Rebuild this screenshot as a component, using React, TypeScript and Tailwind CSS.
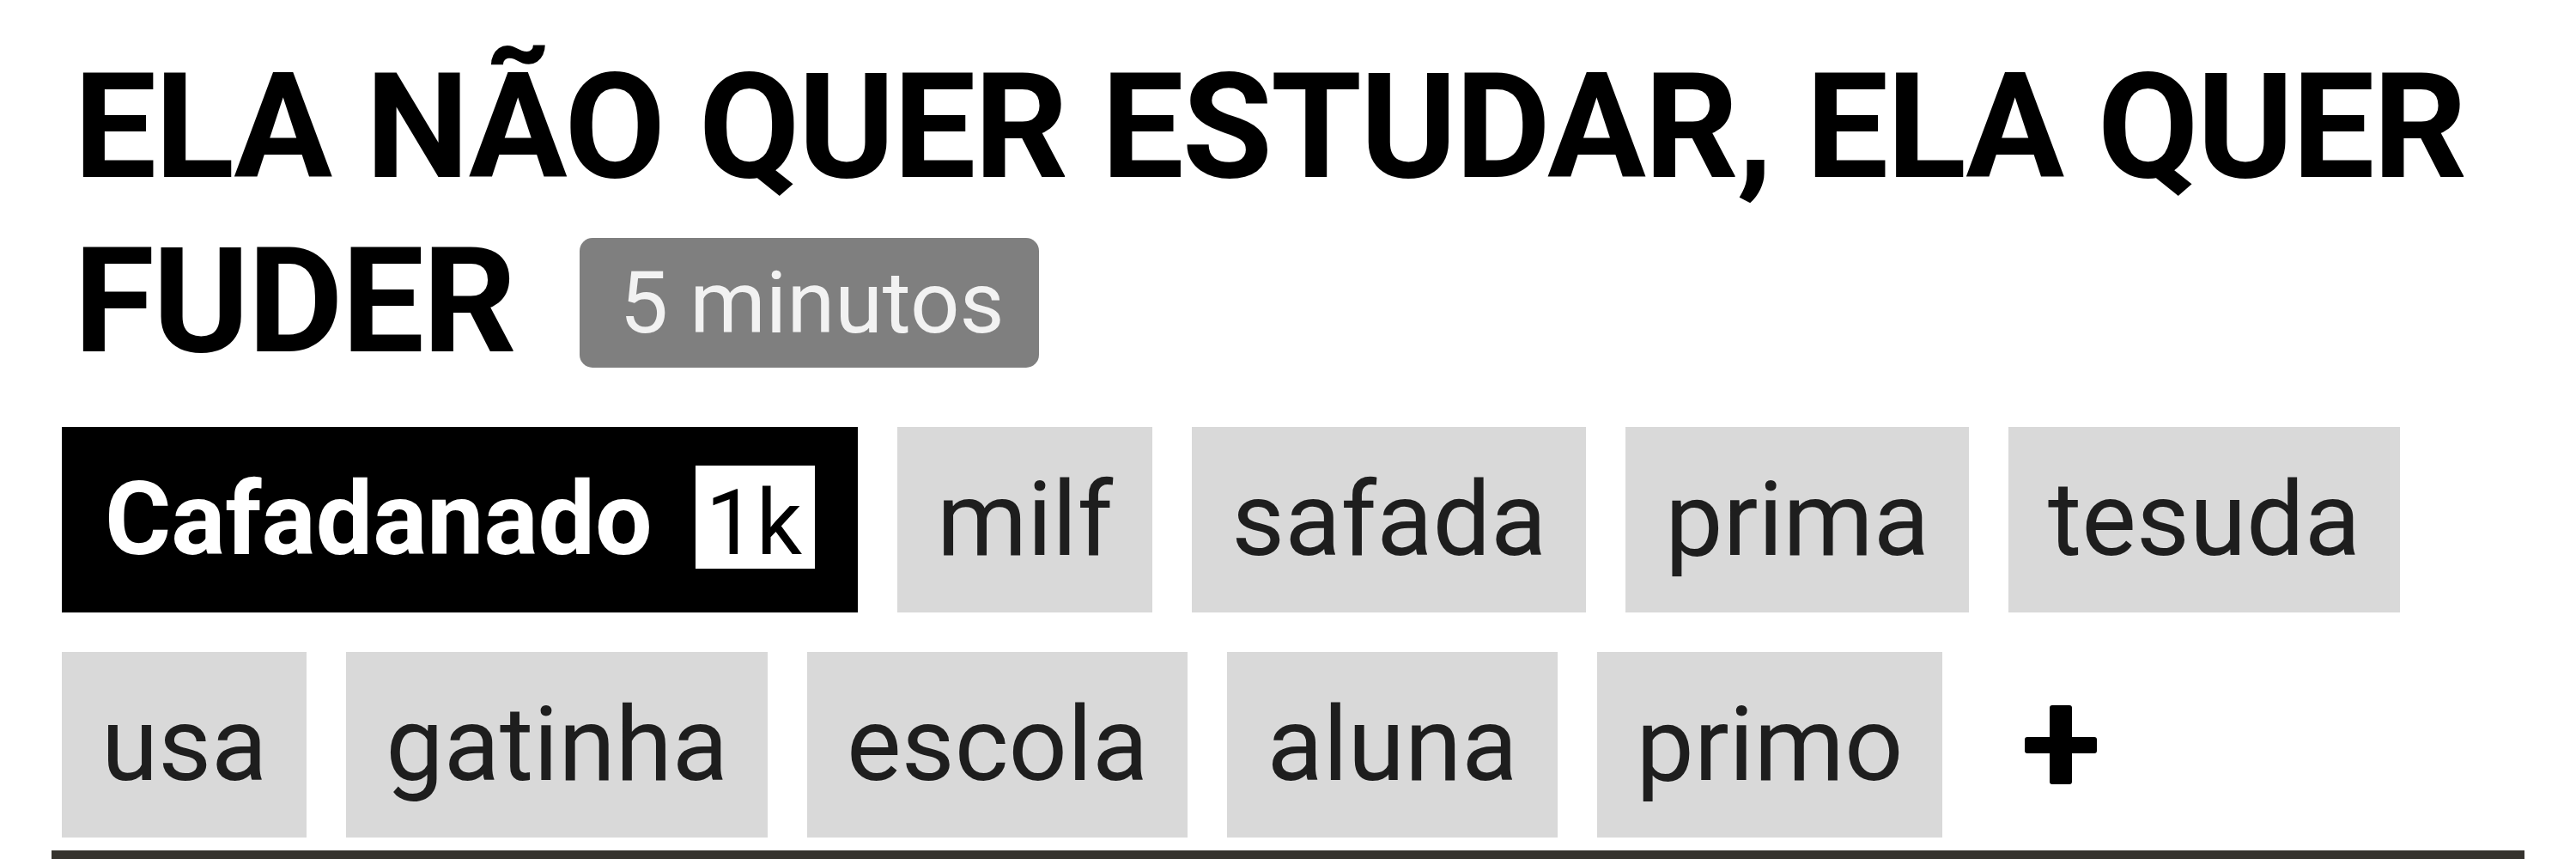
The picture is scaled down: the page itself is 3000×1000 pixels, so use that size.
const tags = ["milf", "safada", "prima", "tesuda", "usa", "gatinha", "escola", "aluna", "primo"];

function Tag({ label }: { label: string }) {
  return (
    <span className="bg-[#d9d9d9] px-[46px] py-[36px] text-[120px] leading-[144px] text-[#1e1e1e]">
      {label}
    </span>
  );
}

function PlusIcon() {
  return (
    <svg width="84" height="92" viewBox="0 0 84 92" fill="#000">
      <rect x="29" y="0" width="26" height="92" rx="3" />
      <rect x="0" y="37" width="84" height="19" rx="3" />
    </svg>
  );
}

export default function App() {
  return (
    <div className="min-h-screen w-[3000px] bg-white font-['Roboto',sans-serif]">
      <div className="pl-[72px] pt-[46px]">
        <h1 className="pl-[14px] text-[171px] font-bold leading-[203px] tracking-[-2px] text-black">
          ELA NÃO QUER ESTUDAR, ELA QUER FUDER
          <span className="ml-[76px] inline-block rounded-[15px] bg-[#7f7f7f] pl-[46px] pr-[40px] pt-[17px] pb-[16px] align-[22px] text-[101px] font-normal leading-[118px] tracking-normal text-[#f2f2f2]">
            5 minutos
          </span>
        </h1>

        <div className="mt-[45px] flex w-[2878px] flex-wrap gap-[46px]">
          <span className="bg-black px-[50px] py-[36px] text-[118px] font-bold leading-[144px] text-white">
            Cafadanado
            <span className="ml-[50px] inline-block bg-white pl-[12px] pr-[15px] pt-[15px] text-[105px] font-normal leading-[105px] text-black">
              1k
            </span>
          </span>
          {tags.map((t) => (
            <Tag key={t} label={t} />
          ))}
          <span className="flex h-[216px] items-center px-[50px]">
            <PlusIcon />
          </span>
        </div>
      </div>

      <div className="mx-[60px] mt-[15px] h-[60px] bg-[#35332e]" />
    </div>
  );
}
